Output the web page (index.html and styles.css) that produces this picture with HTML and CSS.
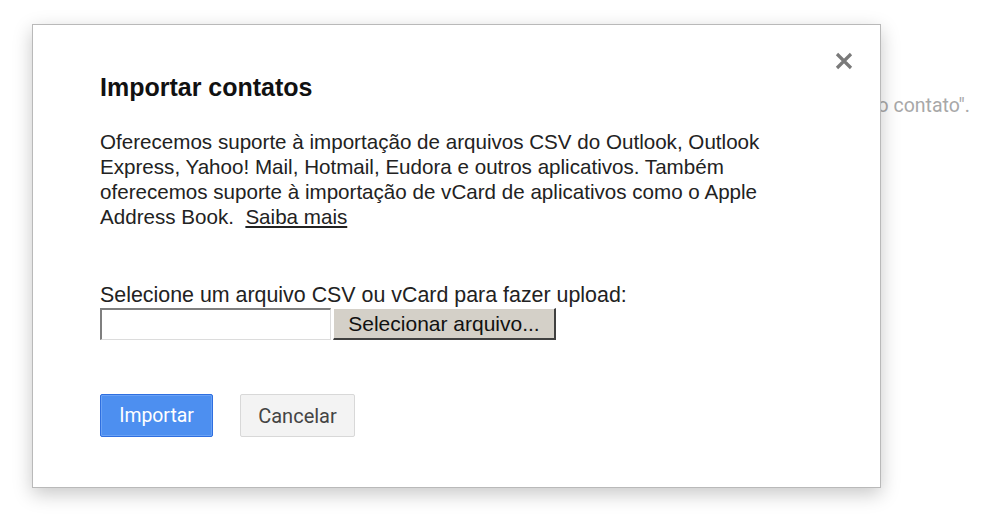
FILE: index.html
```html
<!DOCTYPE html>
<html lang="pt-BR">
<head>
    <meta charset="UTF-8">
    <title>Importar contatos</title>
    <link rel="stylesheet" href="styles.css">
</head>
<body>

    <div class="page">
        <p class="page-hint">Para adicionar alguém, clique em "Novo contato".</p>
    </div>

    <div class="dialog">
        <span class="close">
            <svg width="18" height="18" viewBox="0 0 18 18"><path d="M2 2L16 16M16 2L2 16" stroke="#7a7a7a" stroke-width="3.2" fill="none"/></svg>
        </span>

        <h2>Importar contatos</h2>

        <p class="info">
            Oferecemos suporte à importação de arquivos CSV do Outlook, Outlook<br>
            Express, Yahoo! Mail, Hotmail, Eudora e outros aplicativos. Também<br>
            oferecemos suporte à importação de vCard de aplicativos como o Apple<br>
            Address Book.&nbsp; <a href="#">Saiba mais</a>
        </p>

        <label class="file-label">Selecione um arquivo CSV ou vCard para fazer upload:</label>
        <div class="file-row">
            <span class="file-name"></span>
            <span class="file-btn">Selecionar arquivo...</span>
        </div>

        <div class="actions">
            <button class="btn primary">Importar</button>
            <button class="btn">Cancelar</button>
        </div>
    </div>

</body>
</html>
```

FILE: styles.css
```css
body {
    margin: 0;
    font-family: "Liberation Sans", Arial, sans-serif;
    background: #ffffff;
    color: #222;
}
.page {
    padding: 94px 14px 0 0;
    text-align: right;
}
.page-hint {
    margin: 0;
    font-family: Roboto, "Liberation Sans", sans-serif;
    font-size: 19.5px;
    color: #a8a8a8;
    white-space: nowrap;
}
.dialog {
    position: absolute;
    left: 32px;
    top: 24px;
    width: 713px;
    padding: 48px 67px 50px 67px;
    background: #fff;
    border: 1px solid #b9b9b9;
    box-shadow: 0 6px 18px rgba(0, 0, 0, 0.22);
}
.close {
    position: absolute;
    right: 27px;
    top: 27px;
    width: 18px;
    height: 18px;
}
.close svg {
    display: block;
}
h2 {
    margin: 0;
    font-size: 25px;
    line-height: 28px;
    color: #111;
}
.info {
    margin: 28px 0 0 0;
    font-size: 20.6px;
    line-height: 25px;
    color: #222;
    white-space: nowrap;
}
.info a {
    color: #222;
}
.file-label {
    display: block;
    margin-top: 54px;
    font-size: 21.4px;
    line-height: 25px;
    color: #222;
}
.file-row {
    display: flex;
    align-items: stretch;
    gap: 2px;
    height: 32px;
}
.file-name {
    width: 228px;
    border: 1px solid #7f7f7f;
    border-right-color: #dcdcdc;
    border-bottom-color: #dcdcdc;
    border-top-width: 2px;
    border-left-width: 2px;
    background: #fff;
}
.file-btn {
    display: flex;
    align-items: center;
    justify-content: center;
    width: 220px;
    background: #d4d0c8;
    border: 1px solid #fff;
    border-right: 2px solid #404040;
    border-bottom: 2px solid #404040;
    font-size: 21px;
    color: #111;
}
.actions {
    display: flex;
    gap: 27px;
    margin-top: 54px;
}
.btn {
    height: 43px;
    width: 115px;
    padding: 0;
    border: 1px solid #d8d8d8;
    border-radius: 2px;
    background: #f3f3f3;
    font-family: Roboto, "Liberation Sans", sans-serif;
    font-size: 20px;
    color: #444;
}
.btn.primary {
    width: 113px;
    font-size: 19.4px;
    background: #4d8ff0;
    border-color: #2f6fe0;
    color: #fff;
    box-shadow: inset 0 0 0 1px #6aa2f5;
}
```
